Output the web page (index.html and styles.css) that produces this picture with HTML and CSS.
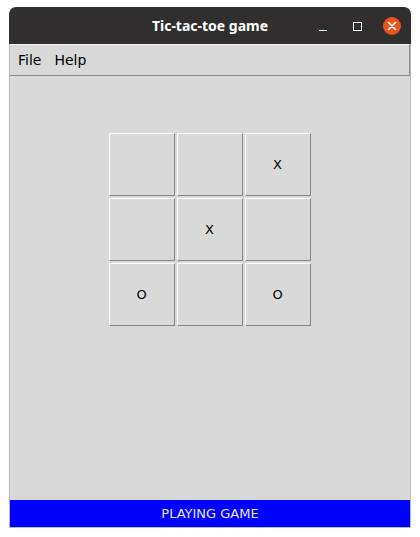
FILE: index.html
```html
<!DOCTYPE html>
<html>
<head>
<meta charset="utf-8">
<link rel="stylesheet" href="styles.css">
</head>
<body>
<div class="window">
  <div class="titlebar">
    <span class="title">Tic-tac-toe game</span>
    <div class="controls">
      <span class="ctl min"><span class="min-line"></span></span>
      <span class="ctl max"><span class="max-box"></span></span>
      <span class="ctl close">
        <svg width="18" height="18" viewBox="0 0 18 18"><circle cx="9" cy="9" r="9" fill="#e95420"/><path d="M5.5 5.5 L12.5 12.5 M12.5 5.5 L5.5 12.5" stroke="#fff" stroke-width="1.5" stroke-linecap="round"/></svg>
      </span>
    </div>
  </div>
  <div class="app">
    <div class="menubar">
      <span class="menu-item">File</span>
      <span class="menu-item">Help</span>
    </div>
    <div class="content">
      <div class="board">
        <button class="cell"></button>
        <button class="cell"></button>
        <button class="cell">X</button>
        <button class="cell"></button>
        <button class="cell">X</button>
        <button class="cell"></button>
        <button class="cell">O</button>
        <button class="cell"></button>
        <button class="cell">O</button>
      </div>
    </div>
    <div class="status">PLAYING GAME</div>
  </div>
</div>
</body>
</html>
```

FILE: styles.css
```css
html, body {
  margin: 0;
  padding: 0;
  background: #ffffff;
}
body {
  font-family: "DejaVu Sans", sans-serif;
}
.window {
  margin: 7px 0 0 9px;
  width: 402px;
  display: flex;
  flex-direction: column;
}
.titlebar {
  height: 37px;
  background: #302e2e;
  border-radius: 7px 7px 0 0;
  position: relative;
  display: flex;
  align-items: center;
  justify-content: center;
}
.title {
  color: #ffffff;
  font-weight: bold;
  font-size: 14px;
  font-family: "Noto Sans", "DejaVu Sans", sans-serif;
  margin-left: 0;
}
.controls {
  position: absolute;
  right: 10px;
  top: 10px;
  display: flex;
  align-items: center;
  gap: 16px;
}
.ctl {
  width: 18px;
  height: 18px;
  display: flex;
  align-items: center;
  justify-content: center;
}
.min-line {
  width: 8px;
  height: 1px;
  background: #ffffff;
  margin-top: 8px;
  margin-right: 2px;
}
.max-box {
  width: 7px;
  height: 7px;
  border: 1px solid #ffffff;
  margin-right: 1px;
}
.close svg {
  display: block;
}
.app {
  background: #d9d9d9;
  border-left: 1px solid #b8b8b8;
  border-right: 1px solid #b8b8b8;
  border-bottom: 1px solid #b8b8b8;
  display: flex;
  flex-direction: column;
  height: 483px;
}
.menubar {
  height: 30px;
  border-top: 1px solid #f2f2f2;
  border-bottom: 1px solid #8a8a8a;
  border-right: 1px solid #8a8a8a;
  display: flex;
  align-items: center;
  padding-left: 8px;
  gap: 13px;
  font-size: 14px;
  color: #000000;
}
.content {
  flex: 1;
  display: flex;
  justify-content: center;
  padding-top: 57px;
}
.board {
  display: grid;
  grid-template-columns: repeat(3, 66px);
  grid-template-rows: repeat(3, 63px);
  gap: 2px;
  align-content: start;
  margin-left: -1px;
}
.cell {
  margin: 0;
  padding: 0;
  background: #d9d9d9;
  border-top: 1px solid #ffffff;
  border-left: 1px solid #ffffff;
  border-right: 1px solid #848484;
  border-bottom: 1px solid #848484;
  font-family: "DejaVu Sans", sans-serif;
  font-size: 13px;
  color: #000000;
}
.status {
  height: 27px;
  background: #0000ff;
  color: #e8e8ff;
  font-size: 13px;
  display: flex;
  align-items: center;
  justify-content: center;
}
```
